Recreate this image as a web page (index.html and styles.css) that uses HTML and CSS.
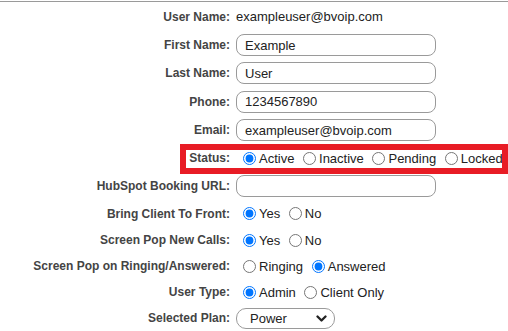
FILE: index.html
```html
<!DOCTYPE html>
<html lang="en">
<head>
    <meta charset="UTF-8">
    <meta name="viewport" content="width=device-width, initial-scale=1.0">
    <title>User Settings</title>
    <link rel="stylesheet" href="styles.css">
</head>
<body>
    <div class="settings">
        <div class="row row-text">
            <span class="lbl">User Name:</span>
            <span class="val">exampleuser@bvoip.com</span>
        </div>
        <div class="row row-input">
            <label class="lbl" for="first">First Name:</label>
            <input type="text" id="first" class="field" value="Example">
        </div>
        <div class="row row-input">
            <label class="lbl" for="last">Last Name:</label>
            <input type="text" id="last" class="field" value="User">
        </div>
        <div class="row row-input">
            <label class="lbl" for="phone">Phone:</label>
            <input type="text" id="phone" class="field" value="1234567890">
        </div>
        <div class="row row-input">
            <label class="lbl" for="email">Email:</label>
            <input type="text" id="email" class="field" value="exampleuser@bvoip.com">
        </div>
        <div class="row row-status">
            <span class="lbl">Status:</span>
            <div class="radios">
                <label><input type="radio" name="status" checked>Active</label>
                <label><input type="radio" name="status">Inactive</label>
                <label><input type="radio" name="status">Pending</label>
                <label><input type="radio" name="status">Locked</label>
            </div>
            <div class="highlight"></div>
        </div>
        <div class="row row-status">
            <label class="lbl" for="hubspot">HubSpot Booking URL:</label>
            <input type="text" id="hubspot" class="field" value="">
        </div>
        <div class="row row-radio-tall">
            <span class="lbl">Bring Client To Front:</span>
            <div class="radios">
                <label><input type="radio" name="front" checked>Yes</label>
                <label><input type="radio" name="front">No</label>
            </div>
        </div>
        <div class="row row-radio">
            <span class="lbl">Screen Pop New Calls:</span>
            <div class="radios">
                <label><input type="radio" name="newcalls" checked>Yes</label>
                <label><input type="radio" name="newcalls">No</label>
            </div>
        </div>
        <div class="row row-radio">
            <span class="lbl">Screen Pop on Ringing/Answered:</span>
            <div class="radios">
                <label><input type="radio" name="popon">Ringing</label>
                <label><input type="radio" name="popon" checked>Answered</label>
            </div>
        </div>
        <div class="row row-radio">
            <span class="lbl">User Type:</span>
            <div class="radios">
                <label><input type="radio" name="usertype" checked>Admin</label>
                <label><input type="radio" name="usertype">Client Only</label>
            </div>
        </div>
        <div class="row row-radio">
            <label class="lbl" for="plan">Selected Plan:</label>
            <div class="select-wrap">
                <select id="plan" class="plan">
                    <option>Power</option>
                    <option>Basic</option>
                </select>
                <svg class="chevron" width="11" height="7" viewBox="0 0 11 7">
                    <path d="M1.5 1.5 L5.5 5.5 L9.5 1.5" fill="none" stroke="#222" stroke-width="2.3" stroke-linecap="round" stroke-linejoin="round"/>
                </svg>
            </div>
        </div>
    </div>
</body>
</html>
```

FILE: styles.css
```css
body {
    margin: 0;
    padding: 0;
    background-color: #fff;
    font-family: "Liberation Sans", Arial, sans-serif;
    color: #222;
}
.settings {
    margin-top: 1px;
    border-top: 1px solid #9a9a9a;
}
.row {
    display: grid;
    grid-template-columns: 230px 1fr;
    column-gap: 6px;
    align-items: center;
    position: relative;
}
.row-text {
    height: 29px;
}
.row-input {
    height: 28.3px;
}
.row-status {
    height: 28px;
}
.row-radio-tall {
    height: 27px;
}
.row-radio {
    height: 26px;
}
.lbl {
    text-align: right;
    font-size: 12px;
    font-weight: bold;
    color: #444;
}
.val {
    font-size: 13px;
}
.field {
    box-sizing: border-box;
    width: 200px;
    height: 22px;
    padding: 0 8px;
    border: 1px solid #9a9a9a;
    border-radius: 8px;
    font-family: "Liberation Sans", Arial, sans-serif;
    font-size: 13px;
    color: #222;
    outline: none;
}
.radios {
    font-size: 13px;
    padding-left: 2px;
    white-space: nowrap;
}
.radios input[type="radio"] {
    margin: 0 3px 0 5px;
    vertical-align: -2px;
}
.highlight {
    position: absolute;
    left: 180px;
    top: 0;
    width: 328px;
    height: 30px;
    box-sizing: border-box;
    border: 6px solid #e81c25;
    pointer-events: none;
}
.select-wrap {
    position: relative;
    width: 99px;
}
.plan {
    appearance: none;
    -webkit-appearance: none;
    box-sizing: border-box;
    width: 99px;
    height: 21px;
    padding: 0 0 0 13px;
    border: 1px solid #9a9a9a;
    border-radius: 10px;
    background: #fff;
    font-family: "Liberation Sans", Arial, sans-serif;
    font-size: 13px;
    color: #222;
}
.chevron {
    position: absolute;
    right: 8px;
    top: 7px;
}
```
